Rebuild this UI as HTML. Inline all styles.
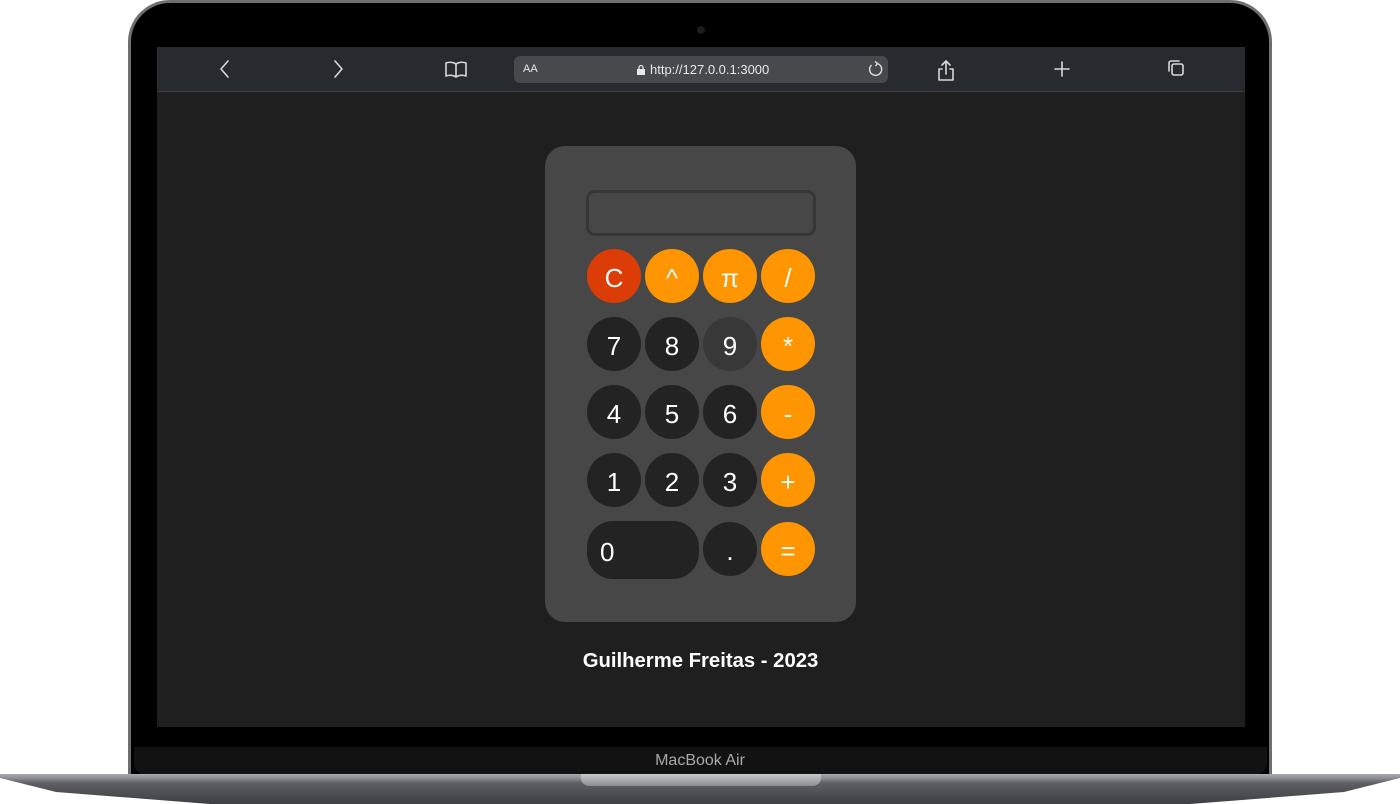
<!DOCTYPE html>
<html><head><meta charset="utf-8"><style>
*{margin:0;padding:0;box-sizing:border-box}
body{width:1400px;height:804px;background:#fff;position:relative;overflow:hidden;font-family:"Liberation Sans",sans-serif}
.abs{position:absolute}
.lid{left:128px;top:0;width:1144px;height:790px;border-radius:42px 42px 0 0;background:#6e6f73;}
.lid2{left:131px;top:3px;width:1138px;height:787px;border-radius:39px 39px 0 0;background:#000;}
.screen{left:157px;top:47px;width:1088px;height:680px;background:#1f1f1f}
.bar{left:157px;top:47px;width:1088px;height:45px;background:#272b2f;border-bottom:1px solid #3a3d41}
.chin{left:134px;top:747px;width:1133px;height:28px;background:#121212;border-radius:0 0 12px 12px}
.base{left:0;top:774px;width:1400px;height:30px;background:linear-gradient(#a9aaae 0,#8e8f94 4px,#5e5f64 9px,#3e3f44 30px);clip-path:polygon(0 0,100% 0,100% 4px,96% 60%,85% 100%,15% 100%,4% 60%,0 4px)}
.notch{left:581px;top:774px;width:240px;height:12px;background:linear-gradient(#c8c9cc,#8c8d91);border-radius:0 0 8px 8px}
.url{left:514px;top:56px;width:374px;height:27px;background:#47494d;border-radius:6px;color:#e8e8e8;font-size:13px}
.calc{left:545px;top:146px;width:311px;height:476px;background:#474747;border-radius:20px}
.disp{left:586px;top:190px;width:230px;height:46px;border:3px solid #363636;border-radius:9px;background:#474747}
.b{position:absolute;width:54px;height:54px;border-radius:50%;background:#232323;color:#fff;font-size:26px;display:flex;align-items:center;justify-content:center;padding-top:4px}
.o{background:#ff9500}
</style></head><body>
<div class="abs lid"></div><div class="abs lid2"></div>
<div class="abs" style="left:697px;top:26px;width:8px;height:8px;border-radius:50%;background:#1a1c22"></div>
<div class="abs screen"></div>
<div class="abs bar"></div>
<svg class="abs" style="left:157px;top:47px" width="1088" height="45" fill="none" stroke="#d8d8d8" stroke-width="1.6" stroke-linecap="round" stroke-linejoin="round">
<path d="M71 14l-7 8 7 8"/><path d="M178 14l7 8-7 8"/>
<path d="M289 16c3-1 7-1 10 1v13c-3-2-7-2-10-1z M309 16c-3-1-7-1-10 1v13c3-2 7-2 10-1z"/>
<path d="M785 22h-3v11h14v-11h-3 M789 27v-13 M785 18l4-4 4 4"/>
<path d="M905 15v14 M898 22h14"/>
<rect x="1015" y="17" width="11" height="11" rx="2"/><path d="M1012 24v-8a2 2 0 0 1 2-2h8"/>
</svg>
<div class="abs url"><span class="abs" style="left:9px;top:7px;font-size:11px">AA</span>
<svg class="abs" style="left:122px;top:8px" width="10" height="12"><rect x="1" y="5" width="8" height="6" fill="#e8e8e8"/><path d="M3 5V3.5a2 2 0 0 1 4 0V5" stroke="#e8e8e8" fill="none" stroke-width="1.3"/></svg>
<span class="abs" style="left:136px;top:6px">http://127.0.0.1:3000</span>
<svg class="abs" style="left:352px;top:4px" width="18" height="18" fill="none" stroke="#e0e0e0" stroke-width="1.4"><path d="M11 3.5A6 6 0 1 1 5.5 5"/><path d="M9 1.5l2.5 2-2 2.5"/></svg></div>
<div class="abs calc"></div>
<div class="abs disp"></div>
<div class="b" style="left:587px;top:249px;background:#dc3d06">C</div>
<div class="b o" style="left:645px;top:249px">^</div>
<div class="b o" style="left:703px;top:249px">π</div>
<div class="b o" style="left:761px;top:249px">/</div>
<div class="b" style="left:587px;top:317px">7</div>
<div class="b" style="left:645px;top:317px">8</div>
<div class="b" style="left:703px;top:317px;background:#383838">9</div>
<div class="b o" style="left:761px;top:317px">*</div>
<div class="b" style="left:587px;top:385px">4</div>
<div class="b" style="left:645px;top:385px">5</div>
<div class="b" style="left:703px;top:385px">6</div>
<div class="b o" style="left:761px;top:385px">-</div>
<div class="b" style="left:587px;top:453px">1</div>
<div class="b" style="left:645px;top:453px">2</div>
<div class="b" style="left:703px;top:453px">3</div>
<div class="b o" style="left:761px;top:453px">+</div>
<div class="b" style="left:587px;top:521px;width:112px;height:58px;border-radius:26px;justify-content:flex-start;padding-left:13px">0</div>
<div class="b" style="left:703px;top:522px">.</div>
<div class="b o" style="left:761px;top:522px">=</div>
<div class="abs" style="left:545px;top:650px;width:311px;text-align:center;color:#fff;font-weight:bold;font-size:20.3px">Guilherme Freitas - 2023</div>
<div class="abs chin"></div>
<div class="abs" style="left:600px;top:752px;width:200px;text-align:center;color:#a9a9ad;font-size:16px">MacBook Air</div>
<div class="abs base"></div>
<div class="abs notch"></div>
</body></html>
